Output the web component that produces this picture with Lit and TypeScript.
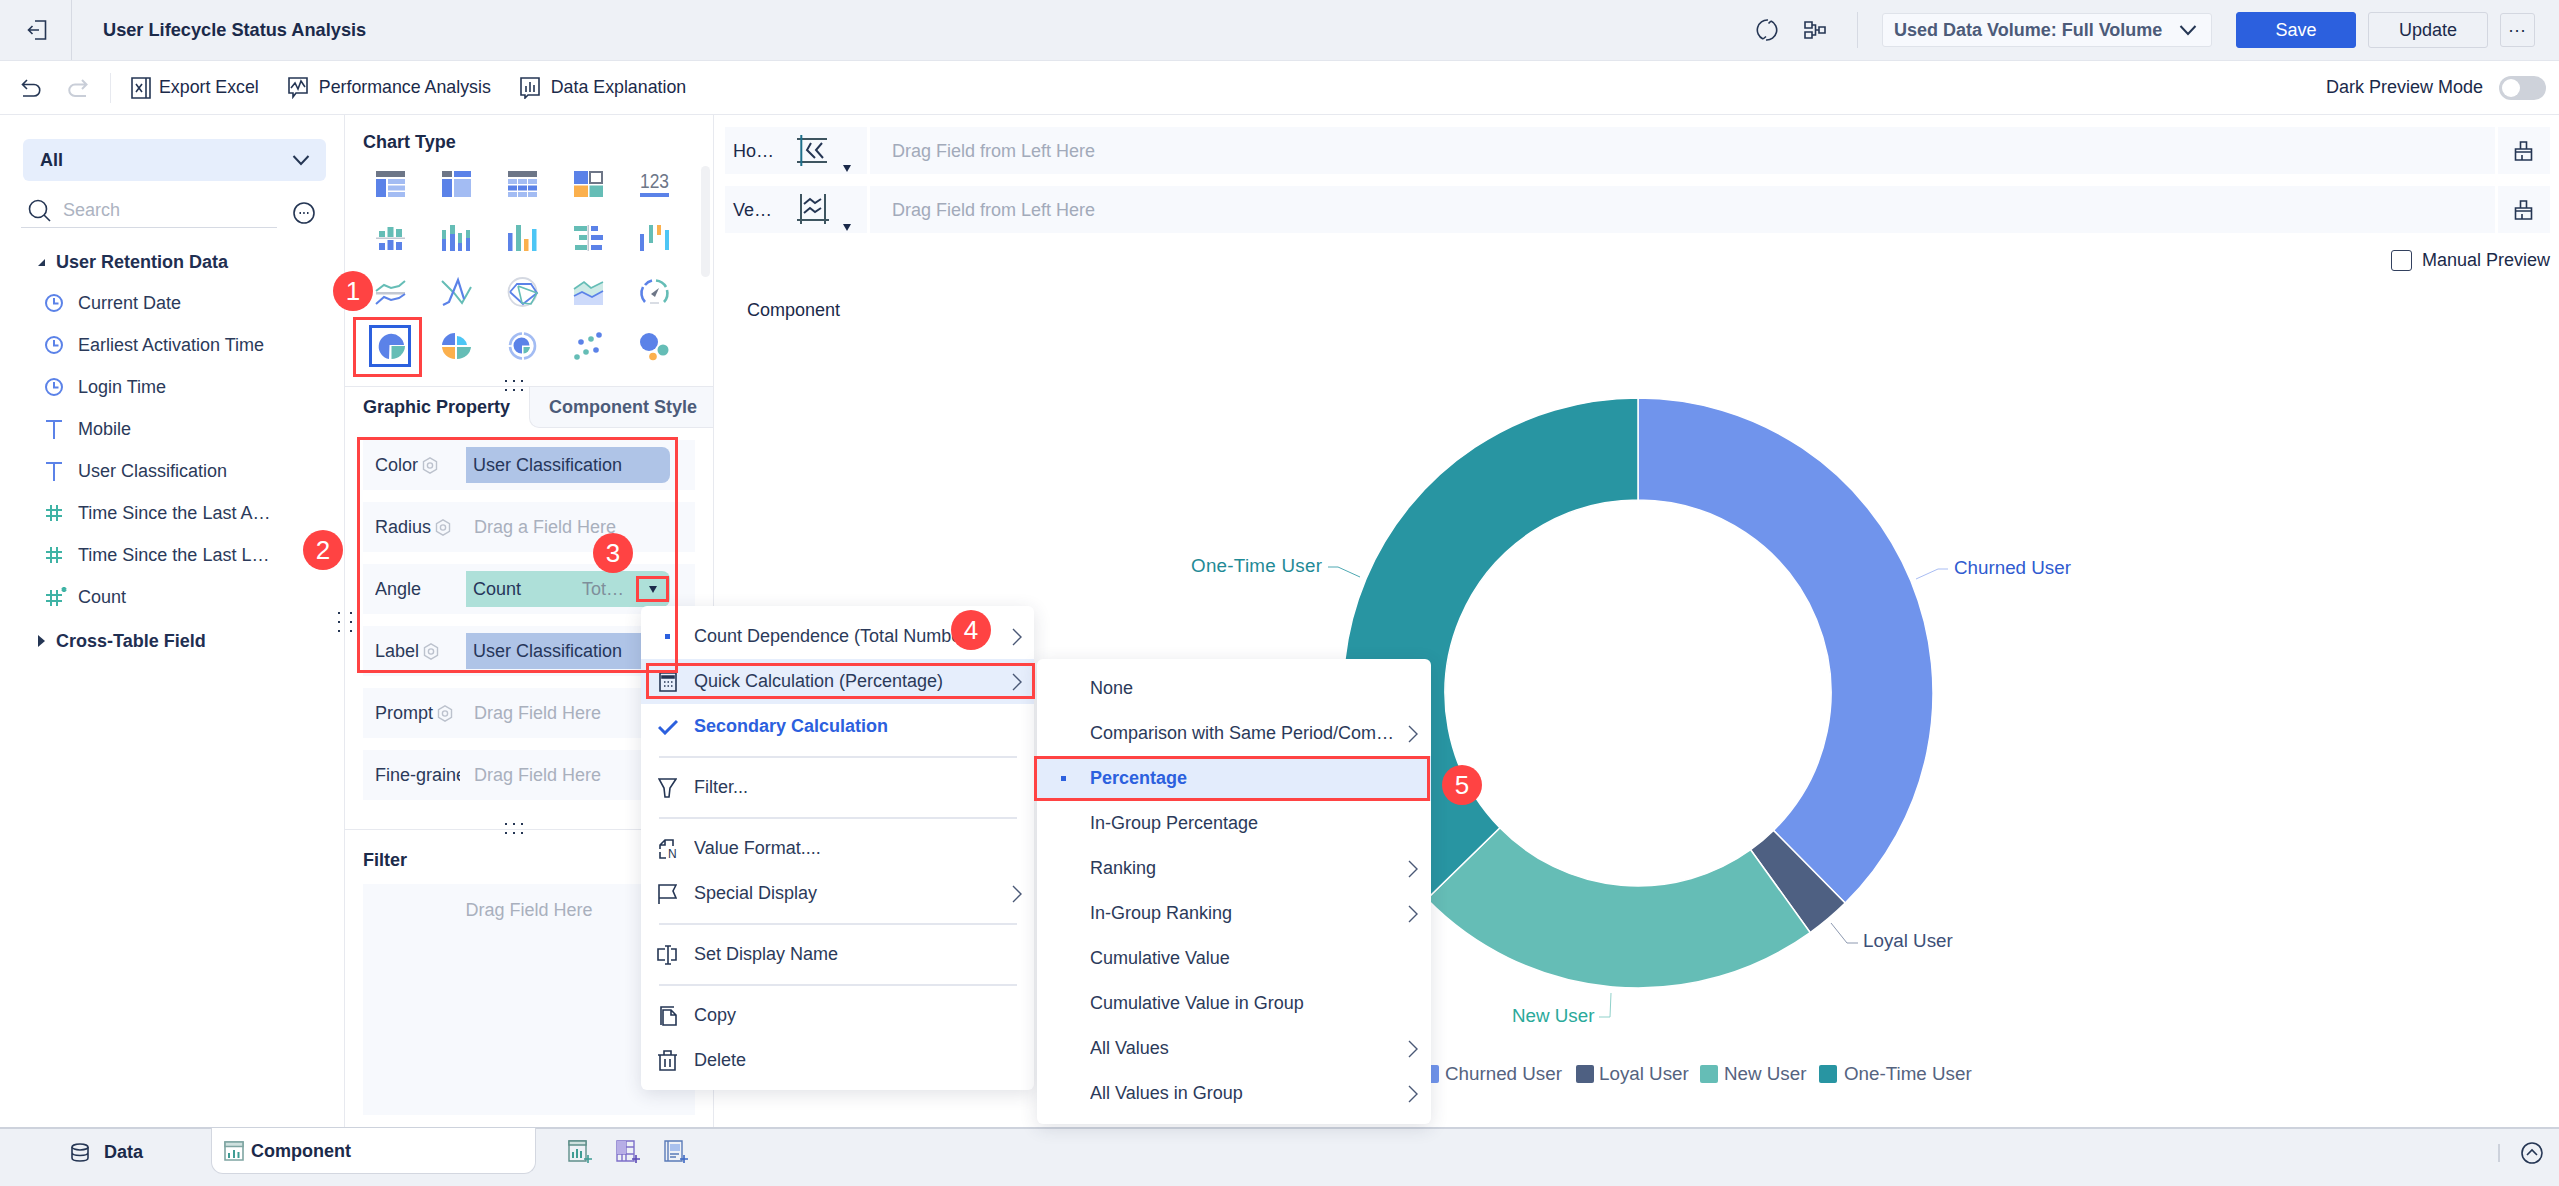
import { LitElement, html, css, svg } from 'lit'
import { customElement } from 'lit/decorators.js'
import { styleMap } from 'lit/directives/style-map.js'

const B = '#5b82e8'
const T = '#65bdb6'
const G = '#6d7687'
const L = '#a3bcf3'
const O = '#fbb04d'
const C = '#4dc6f5'

const r = (x: number, y: number, w: number, h: number, f: string) => svg`<rect x=${x} y=${y} width=${w} height=${h} fill=${f}/>`
const dot = (x: number, y: number, rad: number, f: string) => svg`<circle cx=${x} cy=${y} r=${rad} fill=${f}/>`
const line = (p: string, c: string, w = 1.7) => svg`<polyline points=${p} fill="none" stroke=${c} stroke-width=${w}/>`

// chart type thumbnails, 29x26
const chartIcons = [
  svg`${r(0, 0, 29, 6, G)}${r(0, 8, 10, 18, B)}${r(12, 8, 17, 5, L)}${r(12, 14.5, 17, 5, L)}${r(12, 21, 17, 5, L)}`,
  svg`${r(0, 0, 10, 6, G)}${r(12, 0, 17, 6, B)}${r(0, 8, 10, 18, B)}${r(12, 8, 17, 18, L)}`,
  svg`${r(0, 0, 29, 6, G)}${[8, 14.5, 21].map((y, i) => svg`${r(0, y, 9, 5, i === 1 ? B : L)}${r(10, y, 9, 5, i === 1 ? B : L)}${r(20, y, 9, 5, i === 1 ? B : L)}`)}`,
  svg`${r(0, 0, 14, 13, B)}${r(16, 1, 12, 11, '#fff')}<rect x="16" y="1" width="12" height="11" fill="none" stroke=${G} stroke-width="2"/>${r(0, 14.5, 14, 11.5, O)}${r(15.5, 14.5, 13.5, 11.5, T)}`,
  svg`<text x="14.5" y="17" text-anchor="middle" font-size="20" fill=${G} textLength="29" lengthAdjust="spacingAndGlyphs">123</text>${r(0, 22, 29, 4, B)}`,
  svg`${r(3, 6, 6, 6, T)}${r(11.5, 2, 6, 10, T)}${r(20, 4, 6, 8, T)}${r(0, 12.5, 29, 1.5, '#c3c8d2')}${r(3, 18, 6, 7, B)}${r(11.5, 15, 6, 10, B)}${r(20, 17, 6, 8, B)}`,
  svg`${r(0, 5, 4, 9, T)}${r(0, 14, 4, 12, B)}${r(8, 0, 5, 9, T)}${r(8, 9, 5, 17, B)}${r(16, 8, 4, 10, T)}${r(16, 18, 4, 8, B)}${r(24, 5, 4, 8, T)}${r(24, 13, 4, 13, B)}`,
  svg`${r(0, 8, 4.5, 18, B)}${r(8, 0, 5, 26, T)}${r(16, 14, 4.5, 12, O)}${r(24, 4, 4.5, 22, C)}`,
  svg`${r(0, 1, 13, 5, T)}${r(5, 10, 8, 5, T)}${r(1, 20, 12, 5, T)}${r(13.5, 0, 1.5, 26, '#c3c8d2')}${r(17, 1, 7, 5, B)}${r(17, 10, 12, 5, B)}${r(17, 20, 11, 5, B)}`,
  svg`${r(0, 9, 4, 17, B)}${r(9, 0, 4, 18, T)}${r(17, 0, 4, 10, O)}${r(25, 5, 4, 20, C)}`,
  svg`${line('0,12 8,6 15,9 23,7 29,2', T, 2)}${r(0, 13, 29, 2.5, '#c3c8d2')}${line('0,25 8,18 15,21 23,19 29,15', B, 2)}`,
  svg`${line('0,2 12,14 20,24 29,8', T, 2)}${line('1,26 7,23 16,1 22,20', B, 2.2)}`,
  svg`<circle cx="14.5" cy="13" r="14" fill="none" stroke="#d5d9e2" stroke-width="1.8"/>${line('2,13 9,5 23,5 29,14 15,25 2,13', B, 1.8)}${line('10,7 29,14 23,25 14,24 10,7', T, 1.6)}`,
  svg`<polygon points="0,10 10,3 17,9 29,3 29,24 0,24" fill="#cdeae6"/><polygon points="0,17 8,13 18,18 29,12 29,26 0,26" fill="#cddafa"/>${line('0,10 10,3 17,9 29,3', T)}${line('0,17 8,13 18,18 29,12', B)}`,
  svg`<path d="M5 23A13 13 0 0 1 3 8" fill="none" stroke=${B} stroke-width="2.6"/><path d="M5 6A13 13 0 0 1 12 1.5" fill="none" stroke=${B} stroke-width="2.6"/><path d="M16 1.5A13 13 0 0 1 26 8" fill="none" stroke=${T} stroke-width="2.6"/><path d="M27 11A13 13 0 0 1 24 23" fill="none" stroke=${T} stroke-width="2.6"/><path d="M11 15l8-6-4 9z" fill=${G}/>${r(10, 23, 9, 2, '#d9dde4')}`,
  svg`<path d="M13 26A12.7 12.7 0 1 1 28 12H13.5z" fill=${B}/><path d="M15.5 13H29A13.5 13.5 0 0 1 15.5 26z" fill=${T}/>`,
  svg`<path d="M13 0V12H0A13 13 0 0 1 13 0z" fill=${B}/><path d="M15 3A11 11 0 0 1 25 12H15z" fill=${C}/><path d="M0 14H13V26A13 13 0 0 1 0 14z" fill=${O}/><path d="M15 14H29A14 13 0 0 1 15 26z" fill=${T}/>`,
  svg`<circle cx="14.5" cy="13" r="12.5" fill="none" stroke=${L} stroke-width="2.6" stroke-dasharray="18 2"/><path d="M14 20.5A8 8 0 1 1 21.5 12.5H14z" fill=${B}/><path d="M15.5 14H22A7 7 0 0 1 15.5 20.5z" fill=${T}/>`,
  svg`${dot(3, 24, 2.8, T)}${dot(12, 19, 2.8, T)}${dot(7, 9, 2.8, B)}${dot(17, 6, 2.8, T)}${dot(22, 17, 2.8, B)}${dot(25, 2, 2.8, B)}`,
  svg`${dot(9, 9, 9, B)}${dot(23, 17, 5.5, T)}${dot(13, 23.5, 3.8, O)}`
]

const ico = (w: number, h: number, body: unknown, cls = 'line') => html`<svg class=${cls} width=${w} height=${h} viewBox="0 0 ${w} ${h}">${body}</svg>`

const back = ico(20, 20, svg`<path d="M8 1h10.5v18H8M1.5 10H12M5.5 6l-4 4 4 4"/>`)
const undo = ico(20, 18, svg`<path d="M6 1 1.5 5.5 6 10M1.5 5.5H13a5.7 5.7 0 0 1 0 11.5H2"/>`)
const redo = ico(20, 18, svg`<path d="M14 1l4.5 4.5L14 10M18.5 5.5H7a5.7 5.7 0 0 0 0 11.5h11"/>`, 'line faint')
const excel = ico(20, 22, svg`<path d="M15 1H1v20h14M15 1h4v20h-4M15 1v20M5 7l6 8M11 7l-6 8"/>`)
const perf = ico(20, 22, svg`<path d="M1 1h18v15H8l-3 4v-4H1zM3 11l4-5 3 6 3-8 4 6"/>`)
const explain = ico(20, 22, svg`<path d="M1 1h18v17H8l-3 3v-3H1zM6 9v6M10 5v10M14 8v7"/>`)
const refresh = ico(22, 22, svg`<path d="M12 1A10 10 0 0 0 7 20M10 21A10 10 0 0 0 15 2"/><path d="M7 20l3-2.500M15 2l-2.500 2.500"/>`)
const tree = ico(22, 18, svg`<path d="M1 1h7v6H1zM1 11h7v6H1zM15 6h6v6h-6zM8 4h3.500v10H8M11.500 9H15"/>`)
const chevDown = ico(18, 12, svg`<path d="M1.500 2 9 10l7.500-8"/>`, 'line thick')
const brush = ico(20, 20, svg`<path d="M6.500 8V1h6v7M1.500 8h16v11h-16zM1.500 11h16M8 19v-5"/>`)
const magnifier = ico(23, 23, svg`<circle cx="10" cy="10" r="8.500"/><path d="M16 16l6 6"/>`)
const moreCircle = ico(22, 22, svg`<circle cx="11" cy="11" r="10"/><path class="dots" d="M6.500 11h1.500M10.200 11h1.500M14 11h1.500"/>`)
const clock = ico(18, 18, svg`<circle cx="9" cy="9" r="8"/><path d="M9 4v5.500h4.500"/>`, 'line blue')
const textIcon = ico(18, 20, svg`<path d="M1 2h16M9 2v18"/>`, 'line blue')
const hash = ico(18, 18, svg`<path d="M6 1v16M12 1v16M1 6h16M1 12h16"/>`, 'line teal')
const hashStar = ico(22, 20, svg`<path d="M6 3v16M12 3v16M1 8h16M1 14h16M19 0v5M16.800 1.200l4.400 2.600M21.200 1.200l-4.400 2.600"/>`, 'line teal')
const gear = ico(16, 17, svg`<path d="M8 .8l6.500 3.800v7.800L8 16.200l-6.500-3.800V4.600z"/><circle cx="8" cy="8.500" r="2.600"/>`, 'line gray')
const chev = ico(10, 18, svg`<path d="M1 1l8 8-8 8"/>`, 'line soft')
const hStack = ico(32, 31, svg`<path d="M0 4h30M0 27h30" class="slate"/><path d="M4.300 0v31" class="teal-stroke"/><path d="M14 8l-4 7 8 8M25 8l-6 7 7 8" class="dark"/>`)
const vStack = ico(32, 31, svg`<path d="M0 26h32" class="slate"/><path d="M4 0v30M28 0v30" class="slate"/><path d="M7 10l6-5 5 4 6-4M7 19l6-5 5 4 6-4" class="dark"/>`)

const calc = ico(18, 20, svg`<path d="M1 1h16v18H1z"/><path d="M3 4h12v2H3z" fill="#253654"/><path d="M5 10h1.500M8.500 10H10M12 10h1.500M5 14h1.500M8.500 14H10M12 14h1.500"/>`)
const check = ico(20, 16, svg`<path d="M1 8l6 6L19 2"/>`, 'line blue2')
const funnel = ico(19, 20, svg`<path d="M1 1h17l-6 9-1 9H7l-1-9z"/>`)
const valueFmt = ico(20, 20, svg`<path d="M2 10V6l5-5h8v6M7 1v5H2M2 13v6h6"/><text x="10" y="19" font-size="12" stroke="none" fill="#253654">N</text>`)
const flag = ico(19, 20, svg`<path d="M1 20V1h17l-3 6 3 7H1"/>`)
const rename = ico(21, 20, svg`<path d="M8 4H1v11h7M14 4h5v11h-5M8 1h6M8 19h6M11 1v18"/>`)
const copyIco = ico(19, 20, svg`<path d="M3 19V1h13M5 4h8l5 5v10H5zM13 4v5h5"/>`)
const trash = ico(21, 21, svg`<path d="M1 5h19M7 5V1h7v4M3 5v15h15V5M8 9v8M13 9v8"/>`)

const db = ico(18, 19, svg`<ellipse cx="9" cy="4" rx="8" ry="3"/><path d="M1 4v11c0 4 16 4 16 0V4M1 9.500c0 4 16 4 16 0"/>`)
const compIcon = html`<svg width="20" height="20" viewBox="0 0 20 20"><path d="M1 1h18v18H1z" fill="#fff" stroke="#7fa5a2" stroke-width="1.600"/><path d="M1 1h18v4.500H1z" fill="#cfe0de" stroke="#7fa5a2" stroke-width="1.600"/><path d="M4 12h2v5H4zM9 9h2v8H9zM13.500 11h2v6h-2z" fill="#3f9c94"/></svg>`
const addChart = html`<svg width="24" height="24" viewBox="0 0 24 24"><path d="M1 1h17v20H1z" fill="none" stroke="#5f8f8a" stroke-width="1.400"/><path d="M1 1h17v4H1z" fill="#cfe0de" stroke="#5f8f8a" stroke-width="1.400"/><path d="M4 12h2v6H4zM8 9h2v9H8zM12 11h2v7h-2z" fill="#3f9c94"/><path d="M20 15v8M16 19h8" stroke="#3f9c94" stroke-width="1.600"/></svg>`
const addGrid = html`<svg width="24" height="24" viewBox="0 0 24 24"><path d="M1 1h17v20H1zM1 14h17M10 1v20M10 7h8M6 14v7" fill="none" stroke="#7d6fc9" stroke-width="1.400"/><path d="M1 1h9v13H1z" fill="#b7aee6"/><path d="M20 15v8M16 19h8" stroke="#5a49b5" stroke-width="1.600"/></svg>`
const addText = html`<svg width="24" height="24" viewBox="0 0 24 24"><path d="M1 1h17v20H1zM4 1v20" fill="none" stroke="#5a7bb8" stroke-width="1.400"/><path d="M6 4h10v7H6z" fill="#a9c1ee"/><path d="M6 14h9M6 17h6" stroke="#5a7bb8" stroke-width="1.400"/><path d="M20 15v8M16 19h8" stroke="#3c68c4" stroke-width="1.600"/></svg>`
const upCircle = ico(22, 22, svg`<circle cx="11" cy="11" r="10"/><path d="M6 13l5-5 5 5"/>`)

const fields = [
  { i: clock, t: 'Current Date' },
  { i: clock, t: 'Earliest Activation Time' },
  { i: clock, t: 'Login Time' },
  { i: textIcon, t: 'Mobile' },
  { i: textIcon, t: 'User Classification' },
  { i: hash, t: 'Time Since the Last A…' },
  { i: hash, t: 'Time Since the Last L…' },
  { i: hashStar, t: 'Count' }
]

const menuOne = [
  { slot: html`<i class="sq"></i>`, t: 'Count Dependence (Total Number)', more: true, clip: true },
  { slot: calc, t: 'Quick Calculation (Percentage)', more: true, hover: true },
  { slot: check, t: 'Secondary Calculation', active: true },
  'sep',
  { slot: funnel, t: 'Filter...' },
  'sep',
  { slot: valueFmt, t: 'Value Format....' },
  { slot: flag, t: 'Special Display', more: true },
  'sep',
  { slot: rename, t: 'Set Display Name' },
  'sep',
  { slot: copyIco, t: 'Copy' },
  { slot: trash, t: 'Delete' }
] as any[]

const menuTwo = [
  { t: 'None' },
  { t: 'Comparison with Same Period/Com…', more: true },
  { t: 'Percentage', picked: true },
  { t: 'In-Group Percentage' },
  { t: 'Ranking', more: true },
  { t: 'In-Group Ranking', more: true },
  { t: 'Cumulative Value' },
  { t: 'Cumulative Value in Group' },
  { t: 'All Values', more: true },
  { t: 'All Values in Group', more: true }
] as any[]

const redBoxes = [
  [353, 317, 69, 60],
  [357, 437, 321, 236],
  [636, 576, 33, 26],
  [646, 663, 389, 36],
  [1034, 756, 396, 45]
]

const badges = [
  [1, 353, 291],
  [2, 323, 550],
  [3, 613, 553],
  [4, 971, 630],
  [5, 1462, 785]
]

const CX = 1637
const CY = 693
const slices = [
  { from: 0, to: 135.4, c: '#7094ec' },
  { from: 135.4, to: 144.3, c: '#4e6082' },
  { from: 144.3, to: 225.7, c: '#65bdb6' },
  { from: 225.7, to: 360, c: '#2895a2' }
]

function ringPath (from: number, to: number) {
  const pt = (a: number, rad: number) => {
    const t = (a * Math.PI) / 180
    return `${(CX + rad * Math.sin(t)).toFixed(2)} ${(CY - rad * Math.cos(t)).toFixed(2)}`
  }
  const big = to - from > 180 ? 1 : 0
  return `M${pt(from, 295)}A295 295 0 ${big} 1 ${pt(to, 295)}L${pt(to, 193)}A193 193 0 ${big} 0 ${pt(from, 193)}Z`
}

const legend = [
  { x: 1420, c: '#7094ec', t: 'Churned User', tx: 1444 },
  { x: 1575, c: '#4e6082', t: 'Loyal User', tx: 1598 },
  { x: 1699, c: '#65bdb6', t: 'New User', tx: 1723 },
  { x: 1818, c: '#2895a2', t: 'One-Time User', tx: 1843 }
]

@customElement('app-root')
export class AppRoot extends LitElement {
  static styles = css`
    :host {
      display: block;
      position: relative;
      width: 2559px;
      height: 1186px;
      overflow: hidden;
      background: #fff;
      color: #1b2a4a;
      font: 18px "Liberation Sans", Arial, sans-serif;
    }

    svg.line { fill: none; stroke: #253654; stroke-width: 1.6; flex: none; }
    svg.line.thick { stroke-width: 2; }
    svg.line.faint { stroke: #c9ced8; stroke-width: 2; }
    svg.line.blue { stroke: #5b82e8; stroke-width: 2; }
    svg.line.blue2 { stroke: #2c60de; stroke-width: 3; }
    svg.line.teal { stroke: #3fb3a5; stroke-width: 2; }
    svg.line.gray { stroke: #bcc2cd; stroke-width: 1.4; }
    svg.line.soft { stroke: #4a5876; stroke-width: 1.4; }
    svg.line .dots { stroke-width: 2; }
    svg.line .slate { stroke: #3e5560; stroke-width: 2; }
    svg.line .teal-stroke { stroke: #1d6f8a; stroke-width: 2; }
    svg.line .dark { stroke: #253654; stroke-width: 2; }

    .page {
      display: grid;
      grid-template-rows: 61px 54px 1012px 59px;
      height: 100%;
    }

    .topbar {
      display: flex;
      align-items: center;
      background: #eef1f6;
      border-bottom: 1px solid #e3e6ed;
    }
    .back {
      width: 72px;
      height: 100%;
      flex: none;
      display: flex;
      align-items: center;
      padding-left: 27px;
      box-sizing: border-box;
      border-right: 1px solid #d6dae3;
    }
    .title { margin-left: 31px; font-weight: 700; font-size: 18.2px; }
    .top-right {
      margin-left: auto;
      display: flex;
      align-items: center;
      padding-right: 25px;
    }
    .top-right .tree { margin-left: 26px; display: flex; }
    .vr { width: 1px; height: 36px; background: #d6dae3; margin: 0 24px 0 31px; }
    .volume {
      width: 330px;
      height: 34px;
      box-sizing: border-box;
      display: flex;
      align-items: center;
      justify-content: space-between;
      padding: 0 14px 0 11px;
      background: #f7f9fd;
      border: 1px solid #dfe3ea;
      border-radius: 3px;
      color: #4c5b79;
      font-weight: 700;
    }
    .btn {
      width: 120px;
      height: 36px;
      box-sizing: border-box;
      margin-left: 12px;
      display: flex;
      align-items: center;
      justify-content: center;
      border: 1px solid #d3d7e0;
      border-radius: 3px;
    }
    .btn.save {
      margin-left: 24px;
      background: #2c60de;
      border-color: #2c60de;
      color: #fff;
    }
    .btn.more { width: 35px; height: 34px; letter-spacing: 1px; padding-bottom: 8px; }

    .toolbar {
      display: flex;
      align-items: center;
      border-bottom: 1px solid #e7e9ef;
      padding-left: 21px;
    }
    .toolbar .redo { margin-left: 27px; display: flex; }
    .toolbar .vr { height: 30px; background: #e7e9ef; margin: 0 20px 0 22px; }
    .tool { display: flex; align-items: center; gap: 8px; margin-right: 29px; font-size: 17.8px; }
    .tool + .tool { gap: 11px; }
    .dark-mode {
      margin-left: auto;
      display: flex;
      align-items: center;
      gap: 16px;
      padding-right: 14px;
    }
    .toggle {
      width: 47px;
      height: 24px;
      border-radius: 12px;
      background: #ced2da;
      display: flex;
      align-items: center;
      padding-left: 3px;
      box-sizing: border-box;
    }
    .toggle i { width: 18px; height: 18px; border-radius: 50%; background: #fff; }

    .body { display: flex; min-height: 0; }

    .data {
      width: 345px;
      flex: none;
      box-sizing: border-box;
      border-right: 1px solid #e7e9ef;
      padding-top: 24px;
    }
    .scope {
      width: 303px;
      height: 42px;
      margin-left: 23px;
      box-sizing: border-box;
      padding: 0 16px 0 17px;
      display: flex;
      align-items: center;
      justify-content: space-between;
      background: #e6eefc;
      border-radius: 6px;
      font-weight: 700;
    }
    .search-row { display: flex; align-items: center; margin: 18px 0 0 21px; }
    .search {
      width: 256px;
      height: 29px;
      box-sizing: border-box;
      padding: 0 0 5px 7px;
      display: flex;
      align-items: center;
      gap: 12px;
      border-bottom: 1px solid #d6dae3;
      color: #acb3c1;
    }
    .search-row > svg { margin: -2px 0 0 16px; }
    .section {
      height: 40px;
      margin-top: 14px;
      display: flex;
      align-items: center;
      padding-left: 38px;
      gap: 11px;
      font-weight: 700;
      color: #1f2f52;
    }
    .section.closed { margin-top: 2px; height: 42px; }
    .tri-down {
      width: 0;
      height: 0;
      border-left: 7px solid transparent;
      border-bottom: 7px solid #253654;
    }
    .tri-right {
      width: 0;
      height: 0;
      border-top: 6px solid transparent;
      border-bottom: 6px solid transparent;
      border-left: 7px solid #253654;
    }
    .field {
      height: 42px;
      display: flex;
      align-items: center;
      padding-left: 45px;
      color: #2b3a5a;
    }
    .field .slot { width: 33px; display: flex; }

    .config {
      width: 369px;
      flex: none;
      box-sizing: border-box;
      border-right: 1px solid #e7e9ef;
      display: flex;
      flex-direction: column;
    }
    .types {
      height: 271px;
      flex: none;
      padding-top: 15px;
      box-sizing: border-box;
    }
    .head { padding-left: 18px; line-height: 24px; font-weight: 700; color: #1b2a4a; }
    .grid {
      display: grid;
      grid-template-columns: repeat(5, 66px);
      grid-auto-rows: 54px;
      margin: 3px 0 0 12px;
    }
    .cell { display: flex; align-items: center; justify-content: center; }

    .tabs { display: flex; height: 42px; flex: none; border-top: 1px solid #e7e9ef; box-sizing: border-box; }
    .tab {
      width: 184px;
      display: flex;
      align-items: center;
      padding-left: 18px;
      box-sizing: border-box;
      font-weight: 700;
    }
    .tab.off {
      padding-left: 19px;
      background: #f6f8fc;
      color: #4c5b79;
      border-left: 1px solid #e7e9ef;
      border-bottom: 1px solid #e7e9ef;
      border-bottom-left-radius: 10px;
    }

    .props {
      display: flex;
      flex-direction: column;
      gap: 12px;
      padding: 12px 18px 0;
      height: 401px;
      box-sizing: border-box;
      flex: none;
    }
    .prop {
      height: 50px;
      flex: none;
      display: flex;
      align-items: center;
      background: #f7f9fd;
      padding-left: 12px;
      color: #2b3a5a;
    }
    .prop .name {
      width: 85px;
      margin-right: 6px;
      flex: none;
      overflow: hidden;
      white-space: nowrap;
      display: flex;
      align-items: center;
      gap: 4px;
    }
    .chip {
      width: 204px;
      height: 36px;
      box-sizing: border-box;
      padding-left: 7px;
      display: flex;
      align-items: center;
      border-radius: 0 8px 8px 0;
      background: #afc4e7;
      color: #26365a;
      flex: none;
    }
    .chip.mint { background: #aee0d9; }
    .chip .total { margin-left: auto; margin-right: 46px; color: #7f8f9b; }
    .hint { padding-left: 8px; color: #a9b0bd; }
    .caret {
      position: absolute;
      width: 0;
      height: 0;
      border-left: 4.5px solid transparent;
      border-right: 4.5px solid transparent;
      border-top: 7px solid #1b2a4a;
    }

    .filter { flex: 1; border-top: 1px solid #e7e9ef; padding-top: 18px; box-sizing: border-box; }
    .drop {
      margin: 12px 18px 0;
      height: 231px;
      background: #f7f9fd;
      color: #a9b0bd;
      text-align: center;
      padding-top: 16px;
      box-sizing: border-box;
    }

    .main { flex: 1; padding-top: 12px; box-sizing: border-box; display: flex; flex-direction: column; min-width: 0; }
    .axis { display: flex; height: 47px; margin: 0 10px 12px 11px; gap: 3px; flex: none; }
    .axis-name {
      width: 142px;
      background: #f7f9fd;
      display: flex;
      align-items: center;
      padding-left: 8px;
      box-sizing: border-box;
      position: relative;
      flex: none;
    }
    .axis-name span { width: 64px; padding-top: 2px; }
    .axis-name .caret { left: 118px; bottom: 2px; }
    .axis-input {
      flex: 1;
      background: #f7f9fd;
      color: #a2aaba;
      display: flex;
      align-items: center;
      padding: 2px 0 0 22px;
    }
    .axis-tool {
      width: 52px;
      background: #f7f9fd;
      display: flex;
      align-items: center;
      justify-content: center;
    }
    .manual {
      display: flex;
      justify-content: flex-end;
      align-items: center;
      gap: 10px;
      margin: 5px 10px 0 0;
      height: 21px;
      flex: none;
    }
    .check { width: 21px; height: 21px; box-sizing: border-box; border: 1.5px solid #33415f; border-radius: 3px; }
    .comp-title { margin: 27px 0 0 33px; line-height: 24px; flex: none; }
    .canvas { display: block; flex: none; }
    .canvas text { font: 18.8px "Liberation Sans", Arial, sans-serif; }

    .bottom {
      display: flex;
      align-items: flex-start;
      background: #eef1f6;
      position: relative;
      border-top: 2px solid #cdd2dc;
      box-sizing: border-box;
    }
    .bottom-tab {
      display: flex;
      align-items: center;
      height: 46px;
      font-weight: 700;
    }
    .bottom-tab.data-tab { width: 211px; padding-left: 71px; gap: 15px; box-sizing: border-box; }
    .bottom-tab.on {
      width: 325px;
      box-sizing: border-box;
      padding-left: 12px;
      gap: 7px;
      background: #fff;
      border: 1px solid #d3d7e0;
      border-top: none;
      border-radius: 0 0 12px 12px;
      margin-top: -1px;
      padding-top: 1px;
    }
    .adders { display: flex; gap: 24px; margin: 11px 0 0 32px; }
    .adders svg { display: block; }
    .bottom-right { margin-left: auto; display: flex; align-items: center; gap: 21px; padding: 13px 17px 0 0; }
    .bottom-right i { width: 2px; height: 18px; background: #cdd2dc; }

    .scrollbar {
      position: absolute;
      left: 701px;
      top: 166px;
      width: 9px;
      height: 111px;
      border-radius: 5px;
      background: #f0f1f4;
    }
    .grip {
      position: absolute;
      display: grid;
      gap: 7px 6px;
      grid-template-columns: repeat(3, 2px);
    }
    .grip i { width: 2px; height: 2px; background: #253654; }
    .grip.g1 { left: 505px; top: 380px; }
    .grip.g2 { left: 505px; top: 823px; }
    .grip.g3 { left: 338px; top: 612px; grid-template-columns: repeat(2, 2px); gap: 7px 10px; }

    .menu {
      position: absolute;
      background: #fff;
      border-radius: 6px;
      box-shadow: 0 4px 18px rgba(40, 50, 80, 0.14);
    }
    .menu.one { left: 641px; top: 606px; width: 393px; height: 484px; padding-top: 8px; box-sizing: border-box; }
    .menu.two { left: 1037px; top: 659px; width: 394px; height: 465px; padding-top: 7px; box-sizing: border-box; }
    .item {
      height: 45px;
      display: flex;
      align-items: center;
      padding: 0 12px 0 17px;
      color: #2b3a5a;
    }
    .menu.two .item { padding: 0 13px 0 24px; }
    .item .slot { width: 19px; margin-right: 17px; flex: none; display: flex; align-items: center; justify-content: center; }
    .menu.two .item .slot { width: 4px; margin-right: 25px; }
    .item .label { flex: 1; white-space: nowrap; overflow: hidden; }
    .item .label.clip { flex: none; width: 272px; }
    .item .end { margin-left: auto; display: flex; }
    .item.hover { background: #e6eefc; }
    .item.picked { background: #e3ecfc; color: #2c60de; font-weight: 700; }
    .item.active { color: #2c60de; font-weight: 700; }
    .sep { height: 2px; background: #e3e6ee; margin: 7px 17px 7px 18px; }
    .sq { display: block; flex: none; width: 5px; height: 5px; background: #2c60de; }

    .mark { position: absolute; box-sizing: border-box; border: 3px solid #ff4343; }
    .badge {
      position: absolute;
      width: 40px;
      height: 40px;
      border-radius: 50%;
      background: #ff4343;
      color: #fff;
      font-size: 26px;
      display: flex;
      align-items: center;
      justify-content: center;
    }
  `

  private prop (name: string, content: unknown, withGear = true) {
    return html`<div class="prop">
      <div class="name">${name}${withGear ? gear : ''}</div>
      ${content}
    </div>`
  }

  private menuItem (m: any) {
    if (m === 'sep') return html`<div class="sep"></div>`
    const cls = ['item', m.hover ? 'hover' : '', m.active ? 'active' : '', m.picked ? 'picked' : ''].join(' ')
    return html`<div class=${cls}>
      <span class="slot">${m.slot ?? (m.picked ? html`<i class="sq"></i>` : '')}</span>
      <span class="label ${m.clip ? 'clip' : ''}">${m.t}</span>
      ${m.more ? html`<span class="end">${chev}</span>` : ''}
    </div>`
  }

  private renderChart () {
    return html`<svg class="canvas" width="1846" height="805" viewBox="713 322 1846 805">
      ${slices.map(s => svg`<path d=${ringPath(s.from, s.to)} fill=${s.c} stroke="#fff" stroke-width="1.500"/>`)}
      <polyline points="1915,579 1937,569 1947,569" fill="none" stroke="#a9bdf3" stroke-width="1"/>
      <text x="1953" y="574" fill="#2f5bd0">Churned User</text>
      <polyline points="1327,567 1337,567 1359,577" fill="none" stroke="#4fa9b3" stroke-width="1"/>
      <text x="1321" y="572" text-anchor="end" fill="#1f8a96" textLength="131" lengthAdjust="spacing">One-Time User</text>
      <polyline points="1830,923 1846,943 1857,943" fill="none" stroke="#8d99b0" stroke-width="1"/>
      <text x="1862" y="947" fill="#3d4f77">Loyal User</text>
      <polyline points="1610,993 1609,1017 1598,1017" fill="none" stroke="#8fd1ca" stroke-width="1"/>
      <text x="1511" y="1022" fill="#2aa99a">New User</text>
      ${legend.map(l => svg`<rect x=${l.x} y="1065" width="18" height="18" rx="2" fill=${l.c}/>
        <text x=${l.tx} y="1080" fill="#55637f">${l.t}</text>`)}
    </svg>`
  }

  render () {
    return html`
      <div class="page">
        <header class="topbar">
          <div class="back">${back}</div>
          <div class="title">User Lifecycle Status Analysis</div>
          <div class="top-right">
            ${refresh}
            <span class="tree">${tree}</span>
            <span class="vr"></span>
            <div class="volume">Used Data Volume: Full Volume ${chevDown}</div>
            <div class="btn save">Save</div>
            <div class="btn">Update</div>
            <div class="btn more">...</div>
          </div>
        </header>

        <nav class="toolbar">
          ${undo}
          <span class="redo">${redo}</span>
          <span class="vr"></span>
          <div class="tool">${excel}Export Excel</div>
          <div class="tool">${perf}Performance Analysis</div>
          <div class="tool">${explain}Data Explanation</div>
          <div class="dark-mode">Dark Preview Mode <div class="toggle"><i></i></div></div>
        </nav>

        <div class="body">
          <aside class="data">
            <div class="scope">All ${chevDown}</div>
            <div class="search-row">
              <div class="search">${magnifier}Search</div>
              ${moreCircle}
            </div>
            <div class="section"><i class="tri-down"></i>User Retention Data</div>
            ${fields.map(f => html`<div class="field"><span class="slot">${f.i}</span>${f.t}</div>`)}
            <div class="section closed"><i class="tri-right"></i>Cross-Table Field</div>
          </aside>

          <section class="config">
            <div class="types">
              <div class="head">Chart Type</div>
              <div class="grid">
                ${chartIcons.map(c => html`<div class="cell"><svg width="29" height="26" viewBox="0 0 29 26" overflow="visible">${c}</svg></div>`)}
              </div>
            </div>
            <div class="tabs">
              <div class="tab">Graphic Property</div>
              <div class="tab off">Component Style</div>
            </div>
            <div class="props">
              ${this.prop('Color', html`<div class="chip">User Classification</div>`)}
              ${this.prop('Radius', html`<div class="hint">Drag a Field Here</div>`)}
              ${this.prop('Angle', html`<div class="chip mint">Count<span class="total">Tot…</span></div>`, false)}
              ${this.prop('Label', html`<div class="chip">User Classification</div>`)}
              ${this.prop('Prompt', html`<div class="hint">Drag Field Here</div>`)}
              ${this.prop('Fine-grained', html`<div class="hint">Drag Field Here</div>`, false)}
            </div>
            <div class="filter">
              <div class="head">Filter</div>
              <div class="drop">Drag Field Here</div>
            </div>
          </section>

          <main class="main">
            <div class="axis">
              <div class="axis-name"><span>Ho…</span>${hStack}<i class="caret"></i></div>
              <div class="axis-input">Drag Field from Left Here</div>
              <div class="axis-tool">${brush}</div>
            </div>
            <div class="axis">
              <div class="axis-name"><span>Ve…</span>${vStack}<i class="caret"></i></div>
              <div class="axis-input">Drag Field from Left Here</div>
              <div class="axis-tool">${brush}</div>
            </div>
            <div class="manual"><i class="check"></i>Manual Preview</div>
            <div class="comp-title">Component</div>
            ${this.renderChart()}
          </main>
        </div>

        <footer class="bottom">
          <div class="bottom-tab data-tab">${db}Data</div>
          <div class="bottom-tab on">${compIcon}Component</div>
          <div class="adders">${addChart}${addGrid}${addText}</div>
          <div class="bottom-right"><i></i>${upCircle}</div>
        </footer>
      </div>

      <div class="scrollbar"></div>
      <div class="grip g1">${[0, 1, 2, 3, 4, 5].map(() => html`<i></i>`)}</div>
      <div class="grip g2">${[0, 1, 2, 3, 4, 5].map(() => html`<i></i>`)}</div>
      <div class="grip g3">${[0, 1, 2, 3, 4, 5].map(() => html`<i></i>`)}</div>
      <i class="caret" style=${styleMap({ left: '649px', top: '586px' })}></i>

      <div class="menu one">${menuOne.map(m => this.menuItem(m))}</div>
      <div class="menu two">${menuTwo.map(m => this.menuItem(m))}</div>

      <div class="mark" style=${styleMap({ left: '369px', top: '325px', width: '42px', height: '42px', borderColor: '#2c60de' })}></div>
      ${redBoxes.map(([x, y, w, h]) => html`<div class="mark" style=${styleMap({ left: `${x}px`, top: `${y}px`, width: `${w}px`, height: `${h}px` })}></div>`)}
      ${badges.map(([n, x, y]) => html`<div class="badge" style=${styleMap({ left: `${x - 20}px`, top: `${y - 20}px` })}>${n}</div>`)}
    `
  }
}
